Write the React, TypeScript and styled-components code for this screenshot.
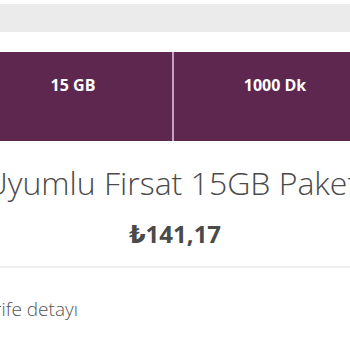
import React from "react";
import styled, { createGlobalStyle } from "styled-components";

const GlobalStyle = createGlobalStyle`
  html, body {
    margin: 0;
    padding: 0;
    background: #fff;
    overflow: hidden;
  }
  body {
    font-family: "Open Sans", "DejaVu Sans", sans-serif;
  }
`;

const Page = styled.div`
  width: 402px;
  margin-left: -26px;
  padding-top: 4px;
`;

const TopBar = styled.div`
  height: 28px;
  background: #ebebeb;
`;

const Features = styled.div`
  display: grid;
  grid-template-columns: 200px 1fr;
  margin-top: 20px;
  height: 89px;
  background: #5e2750;
`;

const Feature = styled.div<{ $divider?: boolean }>`
  padding-top: 22px;
  text-align: center;
  color: #fff;
  font-size: 16px;
  line-height: 22px;
  font-weight: 700;
  border-right: ${(p) => (p.$divider ? "2px solid #c7a1bf" : "none")};
`;

const Title = styled.h1`
  margin: 22px 0 0;
  text-align: center;
  font-size: 32px;
  line-height: 40px;
  font-weight: 300;
  color: #4a4a4a;
  white-space: nowrap;
`;

const Price = styled.div`
  margin-top: 16px;
  text-align: center;
  font-size: 24px;
  line-height: 30px;
  font-weight: 700;
  color: #4a4a4a;
`;

const DetailRow = styled.div`
  margin-top: 17px;
  border-top: 2px solid #eeeeee;
  border-bottom: 3px solid #e0e0e0;
  height: 82px;
  display: flex;
  align-items: center;
  font-size: 19px;
  font-weight: 300;
  color: #555;
`;

export default function App() {
  return (
    <>
      <GlobalStyle />
      <Page>
        <TopBar />
        <Features>
          <Feature $divider>15 GB</Feature>
          <Feature>1000 Dk</Feature>
        </Features>
        <Title>Uyumlu Firsat 15GB Paketi</Title>
        <Price>₺141,17</Price>
        <DetailRow>Tarife detayı</DetailRow>
      </Page>
    </>
  );
}
